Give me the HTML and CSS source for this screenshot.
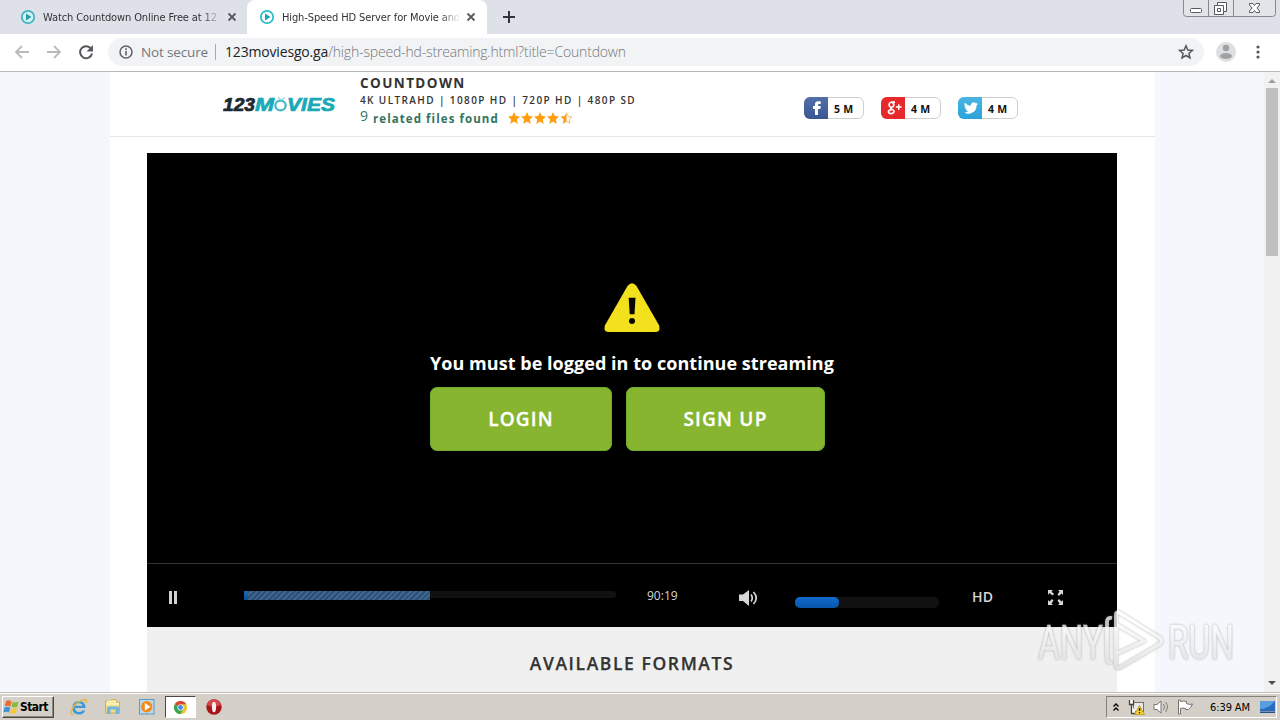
FILE: index.html
```html
<!DOCTYPE html>
<html lang="en">
<head>
<meta charset="utf-8">
<title>High-Speed HD Server for Movie and TV</title>
<link rel="stylesheet" href="styles.css">
</head>
<body>
<div class="desktop">
  <div class="tabstrip">
    <div class="tab tab-idle">
      <svg class="favicon" viewBox="0 0 16 16"><circle cx="8" cy="8" r="6.2" fill="#d5f2f5" stroke="#42b3c1" stroke-width="1.8"/><path d="M6 4.5 11.5 8 6 11.5Z" fill="#279eae"/></svg>
      <span class="tab-title">Watch Countdown Online Free at 12</span>
      <svg class="tab-close" viewBox="0 0 10 10"><path d="M1.5 1.5 8.5 8.5M8.5 1.5 1.5 8.5" stroke="#55585d" stroke-width="1.8"/></svg>
    </div>
    <div class="tab tab-active">
      <svg class="favicon" viewBox="0 0 16 16"><circle cx="8" cy="8" r="6.2" fill="#fff" stroke="#2bbfce" stroke-width="1.8"/><path d="M6 4.5 11.5 8 6 11.5Z" fill="#15a6b7"/></svg>
      <span class="tab-title">High-Speed HD Server for Movie and</span>
      <svg class="tab-close" viewBox="0 0 10 10"><path d="M1.5 1.5 8.5 8.5M8.5 1.5 1.5 8.5" stroke="#55585d" stroke-width="1.8"/></svg>
    </div>
    <svg class="new-tab" viewBox="0 0 14 14"><path d="M7 1V13M1 7H13" stroke="#303337" stroke-width="2"/></svg>
    <svg class="window-buttons" viewBox="0 0 93 17"><path d="M.5 0V13.5Q.5 16.5 3.5 16.5H89.500Q92.500 16.500 92.500 13.500V0M25.500 0V16M50.500 0V16" fill="#e2e4e8" stroke="#858991"/><rect x="7.500" y="8.500" width="11" height="4" rx="1" fill="#fff" stroke="#555962"/><path d="M34.500 2.500H43.500V11.500H40.500V14.500H31.500V5.500H34.500Z" fill="#fff" stroke="#555962"/><path d="M34.500 5.500H40.500V11.500M34.500 8.500H37.500V11.500H34.500Z" fill="none" stroke="#555962"/><path d="M66.500 3.500H70L71.500 5.500 73 3.500H76.500V5L74 8 76.500 11V12.500H73L71.500 10.500 70 12.500H66.500V11L69 8 66.500 5Z" fill="#fff" stroke="#555962"/></svg>
  </div>

  <div class="toolbar">
    <svg class="nav-icon" viewBox="0 0 16 16"><path d="M15 8H2M8 2 2 8 8 14" fill="none" stroke="#b9bbbe" stroke-width="1.8"/></svg>
    <svg class="nav-icon" viewBox="0 0 16 16"><path d="M1 8H14M8 2 14 8 8 14" fill="none" stroke="#b9bbbe" stroke-width="1.8"/></svg>
    <svg class="nav-icon" viewBox="0 0 16 16"><path d="M13.200 5A6 6 0 1 0 14 9.500" fill="none" stroke="#55585d" stroke-width="2"/><path d="M15 1V7.500H8.500Z" fill="#55585d"/></svg>
    <div class="omnibox">
      <svg class="info" viewBox="0 0 14 14"><circle cx="7" cy="7" r="6" fill="none" stroke="#5f6368" stroke-width="1.500"/><path d="M7 6V10.500M7 3.300V4.900" stroke="#5f6368" stroke-width="1.600"/></svg>
      <span class="security">Not secure</span>
      <span class="divider"></span>
      <span class="url"><b>123moviesgo.ga</b>/high-speed-hd-streaming.html?title=Countdown</span>
      <svg class="bookmark" viewBox="0 0 16 16"><path d="M8 1.800 9.800 6 14.400 6.400 10.900 9.400 12 14 8 11.500 4 14 5.100 9.400 1.600 6.400 6.200 6Z" fill="none" stroke="#55585d" stroke-width="1.500"/></svg>
    </div>
    <svg class="avatar" viewBox="0 0 20 20"><circle cx="10" cy="10" r="10" fill="#dedfe1"/><circle cx="10" cy="6" r="3.200" fill="#a0a1a3"/><ellipse cx="10" cy="14" rx="6" ry="3" fill="#a0a1a3"/></svg>
    <svg class="menu-dots" viewBox="0 0 4 14"><circle cx="2" cy="2" r="1.600" fill="#55585d"/><circle cx="2" cy="7" r="1.600" fill="#55585d"/><circle cx="2" cy="12" r="1.600" fill="#55585d"/></svg>
  </div>

  <div class="viewport">
    <div class="page">
      <header class="site-header">
        <svg class="logo" viewBox="0 0 114 20"><g font-family="Liberation Sans, sans-serif" font-size="18" font-weight="700" font-style="italic" stroke-width=".7"><text x="0" y="16" fill="#1c2931" stroke="#1c2931" textLength="32" lengthAdjust="spacingAndGlyphs">123</text><text x="32" y="16" fill="#1aa9b8" stroke="#1aa9b8" textLength="19" lengthAdjust="spacingAndGlyphs">M</text><text x="64" y="16" fill="#1aa9b8" stroke="#1aa9b8" textLength="48" lengthAdjust="spacingAndGlyphs">VIES</text></g><ellipse cx="57.500" cy="10.500" rx="5.200" ry="4.800" fill="none" stroke="#47bac5" stroke-width="2.300"/><path d="M55 2.500 58 5 62 2.500" fill="none" stroke="#8fd4da" stroke-width="1.200"/></svg>
        <div class="movie">
          <div class="movie-title">COUNTDOWN</div>
          <div class="movie-quality">4K ULTRAHD | 1080P HD | 720P HD | 480P SD</div>
          <div class="movie-files"><span class="count">9</span><span class="files">related files found</span>
            <svg class="stars" viewBox="0 0 66 12"><g fill="#ff9d0b"><path id="star" d="M6 0 7.800 4.100 12 4.500 8.800 7.400 9.700 12 6 9.600 2.300 12 3.200 7.400 0 4.500 4.200 4.100Z"/><use href="#star" x="13"/><use href="#star" x="26"/><use href="#star" x="39"/><path d="M58.500 0V9.600L54.800 12 55.700 7.400 52.500 4.500 56.700 4.100Z"/></g><path d="M58.500 .8 60.200 4.500 64 4.900 61.200 7.500 62 11.400 58.500 9" fill="none" stroke="#ffb565"/></svg>
          </div>
        </div>
        <div class="social">
          <div class="badge"><span class="badge-icon facebook"><svg viewBox="0 0 16 16"><path d="M6 15V9H4V6H6V4.500Q6 1.200 9.300 1.200H11.700V4H10Q9 4 9 5V6H11.700L11.300 9H9V15Z" fill="#fff"/></svg></span><span class="badge-count">5 M</span></div>
          <div class="badge"><span class="badge-icon google"><svg viewBox="0 0 16 16"><g fill="none" stroke="#fff" stroke-width="1.700"><ellipse cx="4.700" cy="4.500" rx="2.500" ry="2.700"/><path d="M5 1.700H8.500M5 7.200Q3 8.200 5 9.200 8 10.500 7.500 12 7 14 4.500 14 1.500 14 1.500 12 1.500 10 5 10"/></g><path d="M12.500 4V10M9.500 7H15.500" stroke="#fff" stroke-width="1.500"/></svg></span><span class="badge-count">4 M</span></div>
          <div class="badge"><span class="badge-icon twitter"><svg viewBox="0 0 24 24"><path fill="#fff" d="M23.950 4.570a10 10 0 0 1-2.820.77 4.960 4.960 0 0 0 2.160-2.720c-.95.550-2 .950-3.120 1.180a4.920 4.920 0 0 0-8.380 4.480A13.900 13.900 0 0 1 1.640 3.160a4.820 4.820 0 0 0 1.520 6.570 4.900 4.900 0 0 1-2.230-.61v.06a4.920 4.920 0 0 0 3.950 4.830 5 5 0 0 1-2.210.08 4.930 4.930 0 0 0 4.600 3.420A9.870 9.870 0 0 1 0 19.540a13.990 13.990 0 0 0 21.540-12.430 9.900 9.900 0 0 0 2.410-2.540Z"/></svg></span><span class="badge-count">4 M</span></div>
        </div>
      </header>

      <main class="content">
        <section class="player">
          <div class="screen">
            <svg class="warning" viewBox="0 0 56 50" preserveAspectRatio="none"><path d="M23.500 3Q28-2.500 32.500 3L55 43Q57 50 51 50H5Q-1 50 1 43Z" fill="#f4e11d"/><path d="M24.700 15H31.500L30.500 32H25.700Z" fill="#080800"/><circle cx="28" cy="38.800" r="3" fill="#080800"/></svg>
            <p class="notice">You must be logged in to continue streaming</p>
            <div class="actions"><a class="button login">LOGIN</a><a class="button signup">SIGN UP</a></div>
          </div>
          <div class="controls">
            <svg class="pause" viewBox="0 0 8 13"><path d="M0 0H3V13H0ZM5 0H8V13H5Z" fill="#d2d2d2"/></svg>
            <div class="seek"><div class="seek-played"></div><div class="seek-buffer"></div></div>
            <span class="time">90:19</span>
            <svg class="speaker" viewBox="0 0 19 16"><path d="M0 4.500H4L10 0V16L4 11H0Z" fill="#d6d6d6"/><path d="M12 4.500Q14.500 8 12 11.500M14.500 2Q20 8 14.500 14" fill="none" stroke="#d6d6d6" stroke-width="1.700"/></svg>
            <div class="volume"><div class="volume-level"></div></div>
            <span class="hd">HD</span>
            <svg class="expand" viewBox="0 0 15 15"><path d="M0 0H5L3.500 1.500 6 4 4.500 5.500 1.500 3 0 5ZM10 0H15V5L13.500 3.500 11 6 9.500 4.500 11.500 1.500ZM0 10 1.500 11.500 4 9 5.500 10.500 3.500 13.500 5 15H0ZM11 9 13.500 11.500 15 10V15H10L11.500 13.500 9.500 10.500Z" fill="#d6d6d6"/></svg>
          </div>
        </section>
        <section class="formats">AVAILABLE FORMATS</section>
      </main>
    </div>
    <div class="scrollbar">
      <svg class="arrow" viewBox="0 0 8 4"><path d="M0 4 4 0 8 4Z" fill="#a0a0a0"/></svg>
      <div class="thumb"></div>
      <svg class="arrow arrow-down" viewBox="0 0 8 4"><path d="M0 0 4 4 8 0Z" fill="#4b4d50"/></svg>
    </div>
  </div>

  <div class="taskbar">
    <div class="start"><svg viewBox="0 0 17 16"><path d="M3 2Q6 .5 8.500 2.500L7.500 7.500Q5 6 1.800 7.300Z" fill="#e86c35"/><path d="M9.500 3Q12 4.200 15.500 2.500L14.300 7.700Q11.500 9 8.500 7.800Z" fill="#86bd3c"/><path d="M1.500 8.500Q5 7 7.200 8.700L6 13.500Q3.500 12 .3 13.200Z" fill="#438fd3"/><path d="M8.300 9Q11 10.200 14 8.900L12.800 14Q9.500 15.300 7.200 13.900Z" fill="#f5c736"/></svg><span>Start</span></div>
    <svg class="app-icon" viewBox="0 0 18 18"><path d="M15.500 10H5Q5.500 14 9 14 11.300 14 12.500 12.500H15.300Q13.500 16.500 9 16.500 2.300 16 2.300 9.700 2.700 3.300 9 3 15.800 3.300 15.500 10ZM5.200 7.800H12.500Q12 5.300 9 5.300 6 5.300 5.200 7.800Z" fill="#3a9ad9"/><path d="M3.500 16Q.5 17.500 1 14 3 6 12 2.200 18 0 16.300 5" fill="none" stroke="#e5b83f" stroke-width="1.400"/></svg>
    <svg class="app-icon" viewBox="0 0 18 18"><path d="M1.500 3H6L8 1.500H12V4H15.500V15H1.500Z" fill="#f2dc8a" stroke="#cfad54"/><path d="M2 6H15M3 3.500H12" stroke="#fff7cb" stroke-width="1.500"/><path d="M3 16V10Q3 8.500 5 8.500H13Q15 8.500 15 10V16H11.500V11.500H6.500V16Z" fill="#72b5dd"/></svg>
    <svg class="app-icon" viewBox="0 0 18 18"><rect x="1.500" y="1.500" width="14.500" height="14.500" fill="#b9d9ee" stroke="#5b9bc8"/><circle cx="8.700" cy="8.700" r="5.700" fill="#f28b1b"/><path d="M6.800 5 12.500 8.700 6.800 12.500Z" fill="#fff"/></svg>
    <div class="active-app"><svg viewBox="0 0 16 16"><circle cx="8" cy="8" r="7" fill="#efc52d"/><path d="M8 8 1.940 4.500A7 7 0 0 1 14.060 4.500H8Z" fill="#dc4436"/><path d="M8 8 1.940 4.500A7 7 0 0 0 8 15L11 9.800Z" fill="#35a454"/><circle cx="8" cy="8" r="3.300" fill="#fff"/><circle cx="8" cy="8" r="2.600" fill="#438be5"/></svg></div>
    <svg class="app-icon opera" viewBox="0 0 18 18"><circle cx="9" cy="9" r="7.700" fill="#a71419"/><path d="M2 7Q3 1.800 9 1.500 15 1.800 16 7 9 10 2 7Z" fill="#d54847"/><ellipse cx="9" cy="9" rx="2.100" ry="5.300" fill="#f8eeee"/></svg>
    <div class="tray">
      <svg class="chevrons" viewBox="0 0 6 9"><path d="M.5 3.500 3 1 5.500 3.500M.5 7.500 3 5 5.500 7.500" fill="none" stroke="#000" stroke-width="1.300"/></svg>
      <svg class="tray-icon network" viewBox="0 0 17 16"><rect x="5.500" y="3.500" width="10" height="9" fill="#e8e8e5" stroke="#77736a"/><path d="M1.500 1V5.500H5.500V1M3.500 5.500V14.500H8" fill="#fff" stroke="#47443e" stroke-width="1.300"/><path d="M11.500 6.500 16.500 15.500H6.500Z" fill="#f7d22b" stroke="#b28b13" stroke-width=".7"/><path d="M11.500 9V12M11.500 13V14.300" stroke="#222" stroke-width="1.400"/></svg>
      <svg class="tray-icon" viewBox="0 0 17 16"><path d="M1 5.500H4L8 2V14L4 10.500H1Z" fill="#fff" stroke="#77746f"/><path d="M10.500 5Q12.500 8 10.500 11M12.500 3Q16.500 8 12.500 13" fill="none" stroke="#858179"/></svg>
      <svg class="tray-icon flag" viewBox="0 0 17 16"><path d="M1.500 1V15H3.500V9.500Q6 8.500 8.500 9.500V10.500Q12 11.500 13.500 8.500L15.500 5Q12 6 9.500 4.500V2.500Q6 1.500 3.500 2.500V1Z" fill="#fff" stroke="#77736c"/></svg>
      <span class="clock">6:39 AM</span>
      <svg class="tray-icon monitor" viewBox="0 0 17 16"><rect x="1" y="2" width="15" height="10" fill="#286bc1"/><path d="M1 2H16L12 6Q7 10 1 10Z" fill="#5a9ee2"/><path d="M1 12.500H16V14H1Z" fill="#264f87"/></svg>
    </div>
  </div>

  <svg class="watermark" viewBox="0 0 200 64"><defs><linearGradient id="fade" gradientUnits="userSpaceOnUse" x1="0" y1="10" x2="0" y2="60"><stop offset="0" stop-color="#fff"/><stop offset="1" stop-color="#dcdcdc"/></linearGradient></defs><g font-family="Roboto, sans-serif" font-size="48" font-weight="400" fill="url(#fade)" stroke="url(#fade)" stroke-width=".4"><text x="2" y="50" textLength="65" lengthAdjust="spacingAndGlyphs">ANY</text><text x="132" y="50" textLength="66" lengthAdjust="spacingAndGlyphs">RUN</text></g><path d="M80 6Q80 2 84 4L124 29Q127 32 124 35L85 58Q80 61 80 56V45L108 32 80 15ZM80 15V45M76 9Q71 8 71 13V50Q71 54 76 53" fill="none" stroke="url(#fade)" stroke-width="3.800" stroke-linejoin="round"/></svg>
</div>
</body>
</html>
```

FILE: styles.css
```css
* { box-sizing: border-box; }
body { margin: 0; overflow: hidden; font-family: "Open Sans", "Noto Sans", sans-serif; }
svg { display: block; flex: none; }
.desktop { position: relative; width: 1280px; height: 720px; display: flex; flex-direction: column; }

.tabstrip { height: 34px; background: #dee1e8; display: flex; align-items: flex-start; font-family: "DejaVu Sans Condensed", "DejaVu Sans", sans-serif; font-stretch: condensed; }
.tab { height: 34px; display: flex; align-items: center; color: #303337; }
.tab-idle { width: 247px; padding: 0 10px 0 20px; }
.tab-active { width: 240px; padding: 0 11px 0 12px; background: #fff; border-radius: 8px 8px 0 0; }
.favicon { width: 16px; height: 16px; margin-right: 7px; }
.tab-title { width: 178px; white-space: nowrap; font-size: 11px; letter-spacing: -.12px; mask-image: linear-gradient(90deg, #000 89%, transparent); }
.tab-close { width: 10px; height: 10px; margin-left: auto; }
.new-tab { width: 14px; height: 14px; margin: 10px 0 0 15px; }
.window-buttons { width: 93px; height: 17px; margin: 0 4px 0 auto; }

.toolbar { height: 38px; padding: 0 20px 2px 14px; background: #fff; border-bottom: 1px solid #b5b8ba; display: flex; align-items: center; }
.nav-icon { width: 16px; height: 16px; margin-right: 16px; }
.omnibox { width: 1096px; height: 28px; margin-left: -2px; padding: 0 10px 0 11px; border-radius: 14px; background: #f1f3f4; display: flex; align-items: center; font-size: 14px; color: #74787d; white-space: nowrap; }
.info { width: 14px; height: 14px; margin-right: 8px; }
.security { width: 67px; font-size: 13.5px; letter-spacing: -.15px; }
.divider { width: 1px; height: 16px; margin: 0 9px 0 7px; background: #a6a9ad; }
.url { font-weight: 300; letter-spacing: -.17px; }
.url b { font-weight: 400; color: #202327; }
.bookmark { width: 16px; height: 16px; margin-left: auto; }
.avatar { width: 20px; height: 20px; margin-left: 12px; }
.menu-dots { width: 4px; height: 14px; margin-left: auto; }

.viewport { height: 620px; background: #f4f7fc; display: flex; overflow: hidden; }
.page { width: 1045px; margin-left: 110px; background: #fff; }
.site-header { height: 65px; border-bottom: 1px solid #e6e6e6; display: flex; }
.logo { width: 114px; height: 20px; margin: 23px 0 0 113px; }
.movie { width: 444px; margin-left: 23px; padding-top: 2px; white-space: nowrap; color: #333; }
.movie-title { height: 18px; line-height: 19px; font-size: 13.5px; font-weight: 700; letter-spacing: 1.4px; }
.movie-quality { height: 16px; line-height: 17px; font-size: 10px; font-weight: 600; letter-spacing: 1.39px; }
.movie-files { height: 20px; display: flex; align-items: center; color: #34735f; }
.count { width: 13px; font-size: 14px; line-height: 14px; padding-bottom: 5px; }
.files { width: 135px; font-size: 11.5px; font-weight: 700; letter-spacing: 1.07px; }
.stars { width: 66px; height: 12px; }
.social { display: flex; gap: 17px; padding-top: 25px; }
.badge { width: 60px; height: 22px; border: 1px solid #cfcfcf; border-radius: 6px; display: flex; background: #fff; }
.badge-icon { width: 24px; height: 22px; margin: -1px 0 0 -1px; border-radius: 6px 0 0 6px; display: grid; place-items: center; }
.badge-icon svg { width: 16px; height: 16px; }
.facebook { background: linear-gradient(#526faa, #3a5792); }
.facebook svg { margin-left: 2px; }
.google { background: #e7292b; }
.google svg { margin-left: 3px; width: 15px; }
.twitter { background: linear-gradient(#49b5e3, #2ba3d8); }
.badge-icon.twitter svg { width: 14px; height: 14px; margin-left: 2px; }
.badge-count { margin-left: 6px; line-height: 22px; color: #111; font-size: 10.5px; font-weight: 700; letter-spacing: .3px; }

.content { margin: 16px 38px 0 37px; }
.player { height: 474px; background: #000; color: #fff; }
.screen { height: 410px; padding: 130px 0 0 283px; }
.warning { width: 56px; height: 49px; margin-left: 174px; }
.notice { margin: 17px 0 10px; height: 28px; line-height: 28px; font-size: 18px; font-weight: 700; letter-spacing: .045px; white-space: nowrap; }
.actions { display: flex; gap: 14px; }
.button { height: 64px; padding-bottom: 1px; border: 1px solid #6cae2c; border-radius: 7px; background: #87b530; display: grid; place-items: center; font-size: 19px; font-weight: 600; letter-spacing: 1.2px; -webkit-text-stroke: .3px; }
.login { width: 182px; }
.signup { width: 199px; }
.controls { height: 64px; border-top: 1px solid #333; display: flex; align-items: flex-start; color: #d6d6d6; }
.pause { width: 8px; height: 13px; margin: 27px 0 0 22px; }
.seek { width: 372px; height: 7px; margin: 27px 0 0 67px; background: #111; border-radius: 3px; display: flex; }
.seek-played { width: 4px; height: 9px; background: linear-gradient(#1c69b7, #0b4d96); }
.seek-buffer { width: 182px; height: 9px; background: repeating-linear-gradient(135deg, #294f7a 0 2px, #42668b 2px 4px); }
.time { width: 92px; margin: 23px 0 0 31px; font-size: 12px; line-height: 17px; }
.speaker { width: 19px; height: 16px; margin-top: 26px; }
.volume { width: 144px; height: 11px; margin: 33px 0 0 37px; background: #111; border-radius: 5px; }
.volume-level { width: 44px; height: 11px; border-radius: 5px; background: linear-gradient(#126bd0, #0756a9); }
.hd { width: 76px; margin: 23px 0 0 33px; font-size: 14px; font-weight: 600; line-height: 19px; letter-spacing: .3px; }
.expand { width: 15px; height: 15px; margin-top: 26px; }
.formats { height: 65px; background: #f0f0f0; color: #333; text-align: center; font-size: 17.5px; font-weight: 600; line-height: 73px; letter-spacing: 1.6px; -webkit-text-stroke: .25px; }

.scrollbar { width: 16px; margin-left: auto; background: #f1f1f1; display: flex; flex-direction: column; align-items: center; }
.arrow { width: 8px; height: 4px; margin-top: 7px; }
.thumb { width: 12px; height: 168px; margin-top: 5px; background: #c0c0c0; }
.arrow-down { margin: auto 0 7px; }

.taskbar { height: 28px; padding: 2px 3px 1px 2px; background: #d4d0c8; border-top: 1px solid #bdbbb6; box-shadow: inset 0 1px #fff; display: flex; align-items: center; font-family: "DejaVu Sans Condensed", "DejaVu Sans", sans-serif; font-size: 11px; font-stretch: condensed; }
.start { width: 52px; height: 22px; border: 1px solid; border-color: #fff #494844 #494844 #fff; box-shadow: inset -1px -1px #8e8a82; display: flex; align-items: center; font-size: 12px; font-weight: 700; letter-spacing: -.55px; }
.start svg { width: 17px; height: 16px; }
.app-icon { width: 18px; height: 18px; margin-left: 16px; }
.active-app { width: 31px; height: 22px; margin-left: 9px; background: #fff; border: 1px solid; border-color: #4b4945 #fff #fff #4b4945; display: grid; place-items: center; }
.active-app svg { width: 15px; height: 15px; }
.opera { margin-left: 9px; }
.tray { width: 171px; height: 22px; margin-left: auto; padding: 0 0 0 6px; border: 1px solid; border-color: #85827c #fff #fff #85827c; display: flex; align-items: center; }
.chevrons { width: 6px; height: 9px; }
.tray-icon { width: 17px; height: 16px; }
.network { margin: 0 8px 0 9px; }
.flag { margin-left: 7px; }
.clock { width: 43px; margin: 0 7px 0 16px; white-space: nowrap; letter-spacing: -.1px; }
.monitor { margin-left: auto; }
.watermark { position: absolute; left: 1036px; top: 609px; width: 200px; height: 64px; overflow: visible; opacity: .78; filter: drop-shadow(0 0 1px #777b); }
```
